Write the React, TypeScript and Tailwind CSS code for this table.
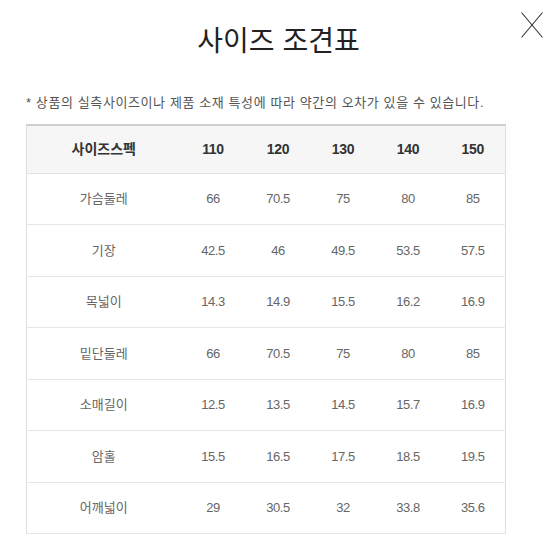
const sizes = ["110", "120", "130", "140", "150"];

const rows: { label: string; values: string[] }[] = [
  { label: "가슴둘레", values: ["66", "70.5", "75", "80", "85"] },
  { label: "기장", values: ["42.5", "46", "49.5", "53.5", "57.5"] },
  { label: "목넓이", values: ["14.3", "14.9", "15.5", "16.2", "16.9"] },
  { label: "밑단둘레", values: ["66", "70.5", "75", "80", "85"] },
  { label: "소매길이", values: ["12.5", "13.5", "14.5", "15.7", "16.9"] },
  { label: "암홀", values: ["15.5", "16.5", "17.5", "18.5", "19.5"] },
  { label: "어깨넓이", values: ["29", "30.5", "32", "33.8", "35.6"] },
];

const App = () => {
  return (
    <div className="w-[550px] h-[550px] bg-white relative overflow-hidden font-['Liberation_Sans','Noto_Sans_CJK_KR',sans-serif]">
      {/* close button */}
      <button className="absolute top-[12px] left-[521px] w-[22px] h-[26px]" aria-label="닫기">
        <svg width="22" height="26" viewBox="0 0 22 26">
          <line x1="0.5" y1="0.5" x2="21.5" y2="25.5" stroke="#333" strokeWidth="1.1" />
          <line x1="21.5" y1="0.5" x2="0.5" y2="25.5" stroke="#333" strokeWidth="1.1" />
        </svg>
      </button>

      <div className="pl-[26px] pr-[45px] pt-[22px]">
        <h2 className="text-[28px] leading-[40px] text-[#222] text-center pl-[26px] font-normal">
          사이즈 조견표
        </h2>

        <p className="mt-[32px] text-[13px] leading-[18px] text-[#555] tracking-[0.6px] whitespace-nowrap">
          * 상품의 실측사이즈이나 제품 소재 특성에 따라 약간의 오차가 있을 수 있습니다.
        </p>

        <table className="mt-[12px] w-[479px] table-fixed border-collapse border-x border-[#dedede] border-b">
          <colgroup>
            <col className="w-[154px]" />
            {sizes.map((s) => (
              <col key={s} className="w-[65px]" />
            ))}
          </colgroup>
          <thead>
            <tr className="h-[48px] bg-[#f6f6f6] border-t-2 border-t-[#cfcfcf] border-b border-b-[#e2e2e2]">
              <th className="text-[14px] font-bold text-[#333] text-center">사이즈스펙</th>
              {sizes.map((s) => (
                <th key={s} className="text-[14px] font-bold text-[#333] text-center tracking-[-0.3px]">
                  {s}
                </th>
              ))}
            </tr>
          </thead>
          <tbody>
            {rows.map((r) => (
              <tr key={r.label} className="h-[51.5px] border-b border-[#e6e6e6]">
                <td className="text-[13px] text-[#666] text-center">{r.label}</td>
                {r.values.map((v, i) => (
                  <td key={i} className="text-[13px] text-[#666] text-center tracking-[-0.4px]">
                    {v}
                  </td>
                ))}
              </tr>
            ))}
          </tbody>
        </table>
      </div>
    </div>
  );
};

export default App;
